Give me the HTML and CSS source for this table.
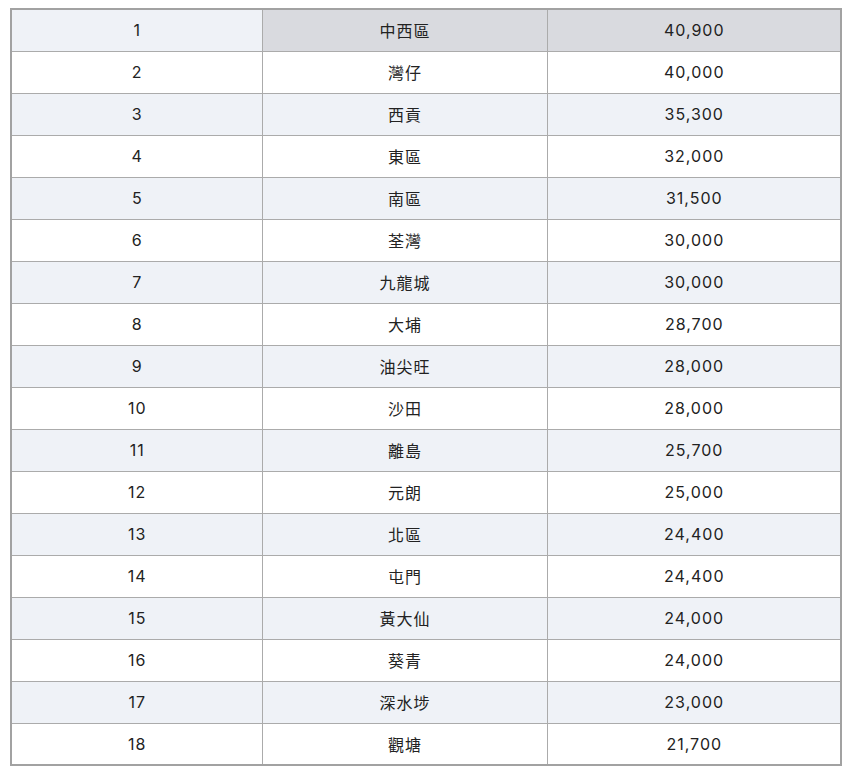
FILE: index.html
```html
<!DOCTYPE html>
<html>
<head>
<meta charset="utf-8">
<link rel="stylesheet" href="styles.css">
</head>
<body>
<table class="rank">
<colgroup><col class="c1"><col class="c2"><col class="c3"></colgroup>
<tbody>
<tr class="hl"><td class="n">1</td><td class="g">中西區</td><td class="g">40,900</td></tr>
<tr><td>2</td><td>灣仔</td><td>40,000</td></tr>
<tr class="alt"><td>3</td><td>西貢</td><td>35,300</td></tr>
<tr><td>4</td><td>東區</td><td>32,000</td></tr>
<tr class="alt"><td>5</td><td>南區</td><td>31,500</td></tr>
<tr><td>6</td><td>荃灣</td><td>30,000</td></tr>
<tr class="alt"><td>7</td><td>九龍城</td><td>30,000</td></tr>
<tr><td>8</td><td>大埔</td><td>28,700</td></tr>
<tr class="alt"><td>9</td><td>油尖旺</td><td>28,000</td></tr>
<tr><td>10</td><td>沙田</td><td>28,000</td></tr>
<tr class="alt"><td>11</td><td>離島</td><td>25,700</td></tr>
<tr><td>12</td><td>元朗</td><td>25,000</td></tr>
<tr class="alt"><td>13</td><td>北區</td><td>24,400</td></tr>
<tr><td>14</td><td>屯門</td><td>24,400</td></tr>
<tr class="alt"><td>15</td><td>黃大仙</td><td>24,000</td></tr>
<tr><td>16</td><td>葵青</td><td>24,000</td></tr>
<tr class="alt"><td>17</td><td>深水埗</td><td>23,000</td></tr>
<tr><td>18</td><td>觀塘</td><td>21,700</td></tr>
</tbody>
</table>
</body>
</html>
```
FILE: styles.css
```css
html, body {
  margin: 0;
  padding: 0;
  background: #ffffff;
}
body {
  padding: 8px 0 0 10px;
  font-family: Inter, "Noto Sans CJK TC", sans-serif;
  color: #222222;
}
.rank {
  border-collapse: collapse;
  width: 832px;
  table-layout: fixed;
  border: 2px solid #a2a2a2;
  font-size: 16px;
  letter-spacing: 1px;
}
.c1 { width: 251px; }
.c2 { width: 285px; }
.rank td {
  border: 1px solid #ababab;
  text-align: center;
  height: 42px;
  padding: 0 0 0 1px;
  box-sizing: border-box;
}
.rank tr.alt td,
.rank tr.hl td.n {
  background: #eff2f7;
}
.rank tr.hl td.g {
  background: #d9dadf;
}
```
